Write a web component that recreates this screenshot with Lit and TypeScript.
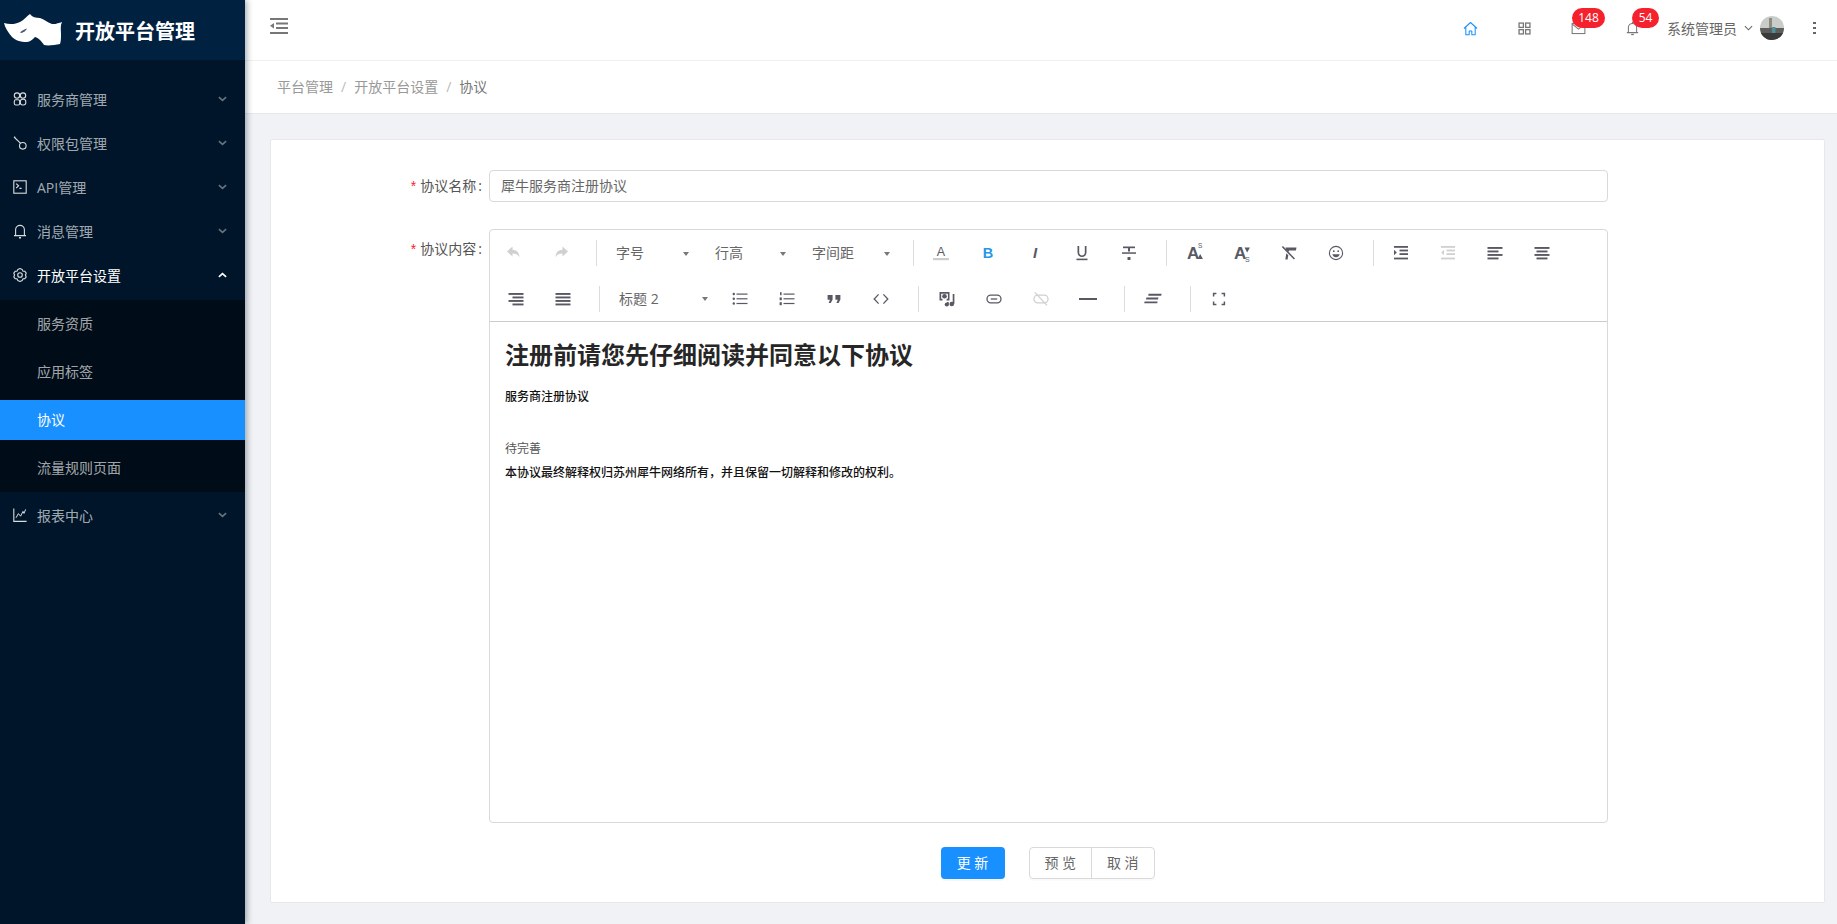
import { LitElement, html, css, svg } from "lit";
import { customElement } from "lit/decorators.js";

const stroke = (inner: unknown, vb = 16) => svg`<svg class="ic" viewBox="0 0 ${vb} ${vb}" fill="none" stroke="currentColor" stroke-width="1.1">${inner}</svg>`;
const fill = (inner: unknown) => svg`<svg class="tb" viewBox="0 0 16 16" fill="currentColor">${inner}</svg>`;
const lines = (arr: number[][], h = 1.4) => arr.map(([x, y, w]) => svg`<rect x=${x} y=${y} width=${w} height=${h}></rect>`);
const LS = "Liberation Sans, sans-serif";

const tbIcons: Record<string, unknown> = {
  undo: fill(svg`<path d="M6.500 1.500 1 6.500l5.500 5V8.400c3.400 0 5.600 1 7 4 0-4.200-2.600-7.400-7-7.600z"></path>`),
  redo: fill(svg`<path d="M9.500 1.500 15 6.500l-5.500 5V8.400c-3.400 0-5.600 1-7 4 0-4.200 2.600-7.400 7-7.600z"></path>`),
  color: fill(svg`<text x="8" y="11" text-anchor="middle" font-size="12.5" font-family=${LS}>A</text><rect x="0" y="13" width="16" height="2.200" fill="#ccc"></rect>`),
  bold: fill(svg`<text x="8" y="13" text-anchor="middle" font-size="14.5" font-family=${LS} font-weight="700">B</text>`),
  italic: fill(svg`<text x="8" y="13" text-anchor="middle" font-size="15" font-family=${LS} font-weight="700" font-style="italic">I</text>`),
  under: fill(svg`<path d="M3.500 1h1.700v6.600a2.800 2.800 0 0 0 5.600 0V1h1.700v6.600a4.500 4.500 0 0 1-9 0z"></path><rect x="2.500" y="13.600" width="11" height="1.600"></rect>`),
  strike: fill(svg`<rect x="2" y="1.500" width="12" height="1.700"></rect><rect x="7" y="3" width="2" height="3.500"></rect><rect x="1" y="7.300" width="14" height="1.500"></rect><rect x="6.500" y="12" width="3" height="3" rx=".6"></rect>`),
  sup: fill(svg`<text x="0" y="14" font-size="17" font-family=${LS} font-weight="700">A</text><text x="11" y="3" font-size="6.500" font-family=${LS}>S</text><path d="M10.500 14l2.700-5 2.700 5z"></path>`),
  sub: fill(svg`<text x="0" y="14" font-size="17" font-family=${LS} font-weight="700">A</text><text x="11" y="17" font-size="7" font-family=${LS}>S</text><path d="M10.500 2.500l2.700 5 2.700-5z"></path>`),
  clear: fill(svg`<path d="M4.500 2.500h11l-.6 3H8.200L7.400 7 5 4.800z"></path><path d="M.8 2 2 1l12 12.600-1.100 1z"></path><path d="M5.300 8.300 7.300 10.200 6.600 14.500H4.300z"></path>`),
  emoji: stroke(svg`<circle cx="8" cy="8" r="6.600"></circle><circle cx="5.800" cy="6.200" r=".9" fill="currentColor" stroke="none"></circle><circle cx="10.200" cy="6.200" r=".9" fill="currentColor" stroke="none"></circle><path d="M4.400 9.200h7.200c-.4 2-1.800 3-3.600 3s-3.200-1-3.600-3z" fill="currentColor" stroke="none"></path>`),
  indent: fill(svg`${lines([[1, 1, 14], [6.500, 4.600, 8.500], [6.500, 8.200, 8.500], [1, 12.600, 14]], 1.800)}<path d="M1 4.800v5.400L3.800 7.500z"></path>`),
  outdent: fill(svg`${lines([[1, 1, 14], [6.500, 4.600, 8.500], [6.500, 8.200, 8.500], [1, 12.600, 14]], 1.800)}<path d="M4 4.800v5.400L1.200 7.500z"></path>`),
  left: fill(svg`${lines([[0.500, 2, 15], [0.500, 5.500, 11], [0.500, 9, 15], [0.500, 12.500, 11]], 1.900)}`),
  center: fill(svg`${lines([[0.500, 2, 15], [2.500, 5.500, 11], [0.500, 9, 15], [2.500, 12.500, 11]], 1.900)}`),
  right: fill(svg`${lines([[0.500, 2, 15], [4.500, 5.500, 11], [0.500, 9, 15], [4.500, 12.500, 11]], 1.900)}`),
  justify: fill(svg`${lines([[0.500, 2, 15], [0.500, 5.500, 15], [0.500, 9, 15], [0.500, 12.500, 15]], 1.900)}`),
  ul: fill(svg`${lines([[4.500, 2.500, 11], [4.500, 7.200, 11], [4.500, 11.900, 11]], 1.200)}<circle cx="1.800" cy="3" r="1.200"></circle><circle cx="1.800" cy="7.800" r="1.200"></circle><circle cx="1.800" cy="12.500" r="1.200"></circle>`),
  ol: fill(svg`${lines([[4.500, 2.500, 11], [4.500, 7.200, 11], [4.500, 11.900, 11]], 1.200)}<rect x="1" y="1.200" width="1.600" height="3"></rect><rect x="0.600" y="6.400" width="2.200" height="2.800"></rect><rect x="0.600" y="11.200" width="2.200" height="3"></rect>`),
  quote: fill(svg`<path d="M1.600 4h5v4.600L4.800 12H2.600l1.400-3.200H1.600z"></path><path d="M9.400 4h5v4.600L12.600 12h-2.200l1.400-3.200H9.400z"></path>`),
  code: stroke(svg`<path d="M5.600 3.400 1.200 8l4.400 4.600M10.400 3.400 14.800 8l-4.400 4.600" stroke-width="1.300"></path>`),
  media: fill(svg`<path d="M.500 1h10v8.500H7.600V7.800h1.300V2.700H2.200v5.100h1.300v1.700H.500z"></path><circle cx="5.500" cy="5.200" r="2.300"></circle><rect x="13.700" y="3" width="1.700" height="9.800"></rect><circle cx="12.800" cy="13" r="2.300"></circle><rect x="8" y="11" width="1.700" height="2.500"></rect><circle cx="7.800" cy="13.500" r="2.100"></circle>`),
  link: stroke(svg`<rect x="1" y="4.200" width="14" height="7.600" rx="3.800" stroke-width="1.300"></rect><path d="M4.800 8h6.400" stroke-width="1.300"></path>`),
  unlink: stroke(svg`<rect x="1" y="4.200" width="14" height="7.600" rx="3.800" stroke-width="1.300"></rect><path d="M1.800 1.400 14 14.400" stroke-width="1.300"></path>`),
  hr: fill(svg`<rect x="-1" y="7" width="18" height="2"></rect>`),
  format: fill(svg`<path d="M3.600 2.800h13l-.4 1.900h-13zM1.400 6.600h12l-.4 1.900H1zM-.4 10.400h13l-.4 1.900h-13z"></path>`),
  full: stroke(svg`<path d="M2.600 5.400V2.600h2.800M10.600 2.600h2.800v2.800M13.400 10.600v2.800h-2.800M5.400 13.400H2.600v-2.800" stroke-width="1.500"></path>`),
};

type Item =
  | { k: "b"; i: string; st?: string }
  | { k: "d"; l: number; r: number }
  | { k: "s"; t: string; w: number; c: number };

const row1: Item[] = [
  { k: "b", i: "undo", st: "off" }, { k: "b", i: "redo", st: "off" },
  { k: "d", l: 12, r: 9 },
  { k: "s", t: "字号", w: 99, c: 80 }, { k: "s", t: "行高", w: 97, c: 78 }, { k: "s", t: "字间距", w: 99, c: 85 },
  { k: "d", l: 12, r: 3.5 },
  { k: "b", i: "color" }, { k: "b", i: "bold", st: "on" }, { k: "b", i: "italic" }, { k: "b", i: "under" }, { k: "b", i: "strike" },
  { k: "d", l: 13.5, r: 4.5 },
  { k: "b", i: "sup" }, { k: "b", i: "sub" }, { k: "b", i: "clear" }, { k: "b", i: "emoji" },
  { k: "d", l: 13, r: 3.5 },
  { k: "b", i: "indent" }, { k: "b", i: "outdent", st: "off" }, { k: "b", i: "left" }, { k: "b", i: "center" },
];
const row2: Item[] = [
  { k: "b", i: "right" }, { k: "b", i: "justify" },
  { k: "d", l: 13, r: 9 },
  { k: "s", t: "标题 2", w: 107.5, c: 96 },
  { k: "b", i: "ul" }, { k: "b", i: "ol" }, { k: "b", i: "quote" }, { k: "b", i: "code" },
  { k: "d", l: 13.5, r: 4 },
  { k: "b", i: "media" }, { k: "b", i: "link" }, { k: "b", i: "unlink", st: "off" }, { k: "b", i: "hr" },
  { k: "d", l: 13, r: 4 },
  { k: "b", i: "format" },
  { k: "d", l: 14, r: 4 },
  { k: "b", i: "full" },
];

const menuIcons: Record<string, unknown> = {
  apps: stroke(svg`<circle cx="5" cy="4.600" r="2.700"></circle><circle cx="11" cy="4.600" r="2.700"></circle><rect x="2.300" y="8.800" width="5.400" height="5.200" rx="1.600"></rect><rect x="8.300" y="8.200" width="5.500" height="5.800" rx="2.400"></rect>`),
  key: stroke(svg`<circle cx="10.800" cy="10.800" r="3.300"></circle><path d="M8.400 8.200 2 2M2 2l1.400 .3"></path>`),
  term: stroke(svg`<rect x="1.800" y="1.800" width="12.400" height="12.400"></rect><path d="M4.200 4.600 6.600 6.800 4.200 9M7.400 9.400h2.200"></path>`),
  bell: stroke(svg`<path d="M3.600 12.600V6.800a4.400 4.400 0 0 1 8.800 0v5.800zM2 12.600h12"></path><path d="M7 14.800h2" stroke-width="1.600"></path>`),
  gear: stroke(svg`<path d="M8 1.600l2.200.9 .7 1.600 1.800.1 1.500 2 -.8 1.800 .8 1.800-1.500 2-1.800.1-.7 1.600-2.200.9-2.200-.9-.7-1.600-1.800-.1-1.500-2 .8-1.800-.8-1.800 1.500-2 1.800-.1 .7-1.600z" stroke-linejoin="round"></path><circle cx="8" cy="8" r="2.300"></circle>`),
  chart: stroke(svg`<path d="M1.800 1.600v12.800h12.800"></path><path d="M4 10.800 6.400 6.600l2.200 2.600L11 4.400l1 2 1.600-4" stroke-width="1"></path>`),
};

const topIcons = {
  home: svg`<svg class="top blue" viewBox="0 0 16 16" fill="none" stroke="currentColor" stroke-width="1.100" stroke-linejoin="round"><path d="M1 8 8 1.600 15 8M3 6.400V14.600h3.600v-4h2.800v4H13V6.400"></path></svg>`,
  grid: svg`<svg class="top" viewBox="0 0 16 16" fill="none" stroke="currentColor" stroke-width="1.400"><rect x="2.200" y="2.200" width="4.600" height="4.600"></rect><rect x="9.200" y="2.200" width="4.600" height="4.600"></rect><rect x="2.200" y="9.200" width="4.600" height="4.600"></rect><rect x="9.200" y="9.200" width="4.600" height="4.600"></rect></svg>`,
  mail: svg`<svg class="top" viewBox="0 0 16 16" fill="none" stroke="currentColor" stroke-width="1.100"><rect x="1.200" y="2.600" width="13.600" height="10.800"></rect><path d="M1.400 3.400 8 8.600l6.600-5.200"></path></svg>`,
  bell: svg`<svg class="top" viewBox="0 0 16 16" fill="none" stroke="currentColor" stroke-width="1.100"><path d="M3.600 12.400V7a4.400 4.400 0 0 1 8.800 0v5.400zM2 12.400h12"></path><path d="M6.600 14.400h2.800" stroke-width="1.400"></path><path d="M8 1v1.600"></path></svg>`,
};

const chev = (open: boolean) => html`<svg class="chev ${open ? "open" : ""}" viewBox="0 0 10 6" fill="none" stroke="currentColor" stroke-width="1.800"><path d=${open ? "M1 5l4-3.600L9 5" : "M1 1l4 3.600L9 1"}></path></svg>`;

@customElement("app-root")
export class AppRoot extends LitElement {
  static styles = css`
    :host { display: flex; height: 100vh; overflow: hidden; background: #f0f2f5; font: 14px "Open Sans", "Noto Sans CJK SC", sans-serif; color: #666; }
    .side { width: 245px; flex: none; background: #001529; box-shadow: 2px 0 6px rgba(0, 21, 41, .35); position: relative; z-index: 2; color: rgba(255, 255, 255, .65); }
    .brand { height: 60px; background: #002140; display: flex; align-items: center; }
    .logo { width: 60px; height: 36px; margin-left: 3px; flex: none; }
    .brand b { margin-left: 12px; font-size: 20px; font-weight: 700; color: #fff; }
    .menu { padding-top: 20px; display: flex; flex-direction: column; gap: 4px; }
    .mi { height: 38px; padding-bottom: 2px; display: flex; align-items: center; padding-left: 12px; padding-right: 18px; }
    .mi.open { color: #fff; }
    .mi span { margin-left: 9px; flex: 1; }
    .ic { width: 16px; height: 16px; flex: none; color: rgba(255, 255, 255, .85); }
    .chev { width: 9px; height: 6px; color: rgba(255, 255, 255, .4); flex: none; }
    .chev.open { color: #fff; }
    .sub { background: #000c17; padding: 4px 0; display: flex; flex-direction: column; gap: 8px; }
    .si { height: 40px; line-height: 40px; padding-left: 37px; }
    .si.cur { background: #1890ff; color: #fff; }

    .main { flex: 1; min-width: 0; display: flex; flex-direction: column; }
    .head { height: 60px; flex: none; background: #fff; border-bottom: 1px solid #f0f0f0; display: flex; align-items: center; padding-left: 25px; }
    .ham { width: 18px; height: 16px; margin-top: -8px; color: #777; }
    .tools { margin-left: auto; display: flex; align-items: center; padding-bottom: 4px; }
    .ti { width: 54px; height: 20px; position: relative; display: flex; justify-content: center; align-items: center; color: #777; }
    .top { width: 15px; height: 15px; }
    .blue { color: #1890ff; }
    .badge { position: absolute; top: -10px; height: 20px; border-radius: 10px; background: #f5222d; color: #fff; font-size: 12px; line-height: 20px; text-align: center; }
    .b1 { left: 21px; width: 33px; }
    .b2 { left: 27px; width: 27px; }
    .user { margin-left: 8px; color: #666; }
    .uchev { width: 9px; height: 6px; margin: 0 7px; color: #666; }
    .ava { width: 24px; height: 24px; border-radius: 50%; flex: none; }
    .dots { width: 3px; margin: 0 21px 0 29px; display: flex; flex-direction: column; gap: 2.5px; }
    .dots i { height: 2.5px; background: #666; }

    .crumb { height: 53px; flex: none; background: #fff; border-bottom: 1px solid #e8e8e8; display: flex; align-items: center; padding: 0 0 2px 32px; box-sizing: border-box; color: #999; gap: 8px; }
    .crumb .sep { color: #bbb; }
    .crumb .last { color: #777; }

    .card { flex: 1; margin: 25px 12px 21px 25px; background: #fff; border: 1px solid #e8e8e8; border-radius: 2px; display: flex; flex-direction: column; padding: 30px 216px 0 0; }
    .row { display: grid; grid-template-columns: 211px 1fr; column-gap: 7px; }
    .lab { text-align: right; color: #555; line-height: 32px; }
    .lab.t { line-height: 40px; }
    .lab em { color: #f5222d; font-style: normal; font-family: "Liberation Sans", sans-serif; margin-right: 4px; }
    .lab u { text-decoration: none; margin: 0 0 0 2px; }
    .input { height: 32px; box-sizing: border-box; border: 1px solid #d9d9d9; border-radius: 4px; padding: 0 11px; line-height: 30px; color: #666; }
    .row + .row { margin-top: 27px; }
    .editor { height: 594px; box-sizing: border-box; border: 1px solid #d9d9d9; border-radius: 4px; display: flex; flex-direction: column; }
    .bar { height: 92px; box-sizing: border-box; flex: none; border-bottom: 1px solid #ccc; }
    .tr { height: 46px; display: flex; align-items: center; color: #595964; }
    .tr.second { padding-left: 2px; height: 45px; }
    .tbtn { width: 47px; height: 32px; flex: none; display: flex; align-items: center; justify-content: center; }
    .tbtn.off { color: #d0d0d0; }
    .tbtn.on { color: #2a96e8; }
    .tb { width: 16px; height: 16px; overflow: visible; }
    .tbtn .ic { color: inherit; }
    .div { width: 1px; height: 26px; background: #ddd; flex: none; }
    .drop { position: relative; flex: none; box-sizing: border-box; padding-left: 10px; height: 32px; line-height: 32px; color: #666; }
    .caret { position: absolute; top: 14.5px; border: 3px solid transparent; border-top: 4px solid #777; border-bottom: 0; }
    .text { flex: 1; padding: 15px 15px 0; color: #222; font-size: 12px; line-height: 20px; }
    .text h2 { margin: 0; font-size: 24px; line-height: 36px; font-weight: 700; color: #262626; }
    .text p { margin: 4px 0 0; }
    .text .bd { font-weight: 500; color: #111; }
    .text .a { margin-top: 14px; }
    .text .gr { margin-top: 32px; color: #555; }

    .btns { margin: 24px -216px 0 0; display: flex; justify-content: center; gap: 24px; }
    .btn { height: 32px; box-sizing: border-box; border-radius: 4px; line-height: 30px; text-align: center; }
    .pri { width: 64px; background: #1890ff; color: #fff; line-height: 32px; box-shadow: 0 2px 0 rgba(0, 0, 0, .03); }
    .grp { display: flex; width: 126px; border: 1px solid #d9d9d9; color: #666; box-shadow: 0 2px 0 rgba(0, 0, 0, .02); }
    .grp span { flex: 1; }
    .grp span + span { border-left: 1px solid #d9d9d9; }
  `;

  private item(it: Item) {
    if (it.k === "d") return html`<div class="div" style="margin:0 ${it.r}px 0 ${it.l}px"></div>`;
    if (it.k === "s")
      return html`<div class="drop" style="width:${it.w}px">${it.t}<i class="caret" style="left:${it.c - 3}px"></i></div>`;
    return html`<div class="tbtn ${it.st ?? ""}">${tbIcons[it.i]}</div>`;
  }

  render() {
    const mi = (ic: string, t: string, open = false) => html`
      <div class="mi ${open ? "open" : ""}">${menuIcons[ic]}<span>${t}</span>${chev(open)}</div>`;
    return html`
      <aside class="side">
        <div class="brand">
          <svg class="logo" viewBox="3 12 60 36" fill="#fff">
            <path d="M4 23C10 25 16 24 20 22 24 20 27 16 30 14 32 17 36 18 40 18 44 19 48 23 52 24 55 24.500 59 23 62 22 60 26 61 30 61 34 61 38 61 41 60 44 55 45 48 46 44 45 42 42 39 38 35 37 33 39 30 42 27 42 20 42 15 40 12 37 8 32 5 28 4 23Z"></path>
            <path d="M20 32.500C22 30.500 25 29 27 28.500 26 30.500 24 32 21.500 33Z" fill="#4a5c70"></path>
          </svg>
          <b>开放平台管理</b>
        </div>
        <nav class="menu">
          ${mi("apps", "服务商管理")}
          ${mi("key", "权限包管理")}
          ${mi("term", "API管理")}
          ${mi("bell", "消息管理")}
          ${mi("gear", "开放平台设置", true)}
          <div class="sub">
            <div class="si">服务资质</div>
            <div class="si">应用标签</div>
            <div class="si cur">协议</div>
            <div class="si">流量规则页面</div>
          </div>
          ${mi("chart", "报表中心")}
        </nav>
      </aside>
      <div class="main">
        <header class="head">
          <svg class="ham" viewBox="0 0 18 16" fill="currentColor">
            <rect x="0" y="0" width="18" height="2"></rect><rect x="6" y="4.500" width="12" height="2"></rect>
            <rect x="6" y="9" width="12" height="2"></rect><rect x="0" y="14" width="18" height="2"></rect>
            <path d="M0 7.700 4 5v5.400z"></path>
          </svg>
          <div class="tools">
            <div class="ti">${topIcons.home}</div>
            <div class="ti">${topIcons.grid}</div>
            <div class="ti">${topIcons.mail}<span class="badge b1">148</span></div>
            <div class="ti">${topIcons.bell}<span class="badge b2">54</span></div>
            <span class="user">系统管理员</span>
            <svg class="uchev" viewBox="0 0 10 6" fill="none" stroke="currentColor" stroke-width="1.200"><path d="M1 1l4 4 4-4"></path></svg>
            <svg class="ava" viewBox="0 0 24 24">
              <rect width="24" height="24" fill="#c9cdca"></rect>
              <rect x="9" y="2" width="3" height="12" fill="#8d8a80"></rect>
              <rect y="12" width="24" height="12" fill="#5c5f5c"></rect>
              <rect x="12" y="11" width="3.500" height="10" fill="#4f8f9a"></rect>
              <rect y="17" width="24" height="7" fill="#3a3b3a"></rect>
            </svg>
            <div class="dots"><i></i><i></i><i></i></div>
          </div>
        </header>
        <div class="crumb">
          <span>平台管理</span><span class="sep">/</span><span>开放平台设置</span><span class="sep">/</span><span class="last">协议</span>
        </div>
        <section class="card">
          <div class="row">
            <div class="lab"><em>*</em>协议名称<u>:</u></div>
            <div class="input">犀牛服务商注册协议</div>
          </div>
          <div class="row">
            <div class="lab t"><em>*</em>协议内容<u>:</u></div>
            <div class="editor">
              <div class="bar">
                <div class="tr">${row1.map((i) => this.item(i))}</div>
                <div class="tr second">${row2.map((i) => this.item(i))}</div>
              </div>
              <div class="text">
                <h2>注册前请您先仔细阅读并同意以下协议</h2>
                <p class="bd a">服务商注册协议</p>
                <p class="gr">待完善</p>
                <p class="bd">本协议最终解释权归苏州犀牛网络所有，并且保留一切解释和修改的权利。</p>
              </div>
            </div>
          </div>
          <div class="btns">
            <div class="btn pri">更 新</div>
            <div class="btn grp"><span>预 览</span><span>取 消</span></div>
          </div>
        </section>
      </div>
    `;
  }
}
